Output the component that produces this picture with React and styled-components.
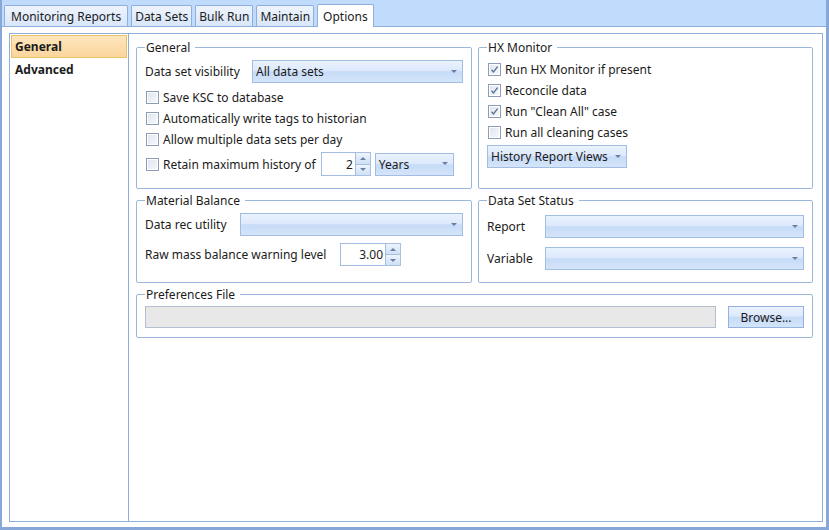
import React from "react";
import styled, { createGlobalStyle, css } from "styled-components";

const Global = createGlobalStyle`
  html, body { margin: 0; padding: 0; background: #fff; }
  * { box-sizing: border-box; }
  body { font-family: "Segoe UI", "Noto Sans", "Open Sans", sans-serif; font-size: 12px; color: #1b1b1b; }
`;

const FONT = `"Segoe UI", "Noto Sans", "Open Sans", sans-serif`;
const BORDER = "#8eaedb";

const Window = styled.div`
  width: 829px;
  height: 530px;
  display: flex;
  flex-direction: column;
  background: #c0dbfc;
  border-left: 2px solid #86a7d8;
  border-right: 3px solid #86a7d8;
  border-bottom: 3px solid #86a7d8;
  font-family: ${FONT};
  font-size: 12px;
`;

const TabStrip = styled.div`
  height: 26px;
  display: flex;
  align-items: flex-end;
  gap: 3px;
  padding-left: 2px;
  position: relative;
  z-index: 1;
`;

const Tab = styled.div`
  height: 21px;
  padding: 0 ${(p) => p.$pad || 5}px;
  display: flex;
  align-items: center;
  border: 1px solid ${BORDER};
  border-bottom: none;
  border-radius: 2px 2px 0 0;
  background: linear-gradient(#eef4fd, #d8e6f9);
  color: #1b1b1b;
  white-space: nowrap;
  ${(p) =>
    p.$active &&
    css`
      height: 23px;
      margin-bottom: -1px;
      background: #fff;
    `}
`;

const Panel = styled.div`
  flex: 1;
  min-height: 0;
  display: flex;
  background: #fff;
  border-top: 1px solid ${BORDER};
  padding: 6px 4px 5px 7px;
`;

const Frame = styled.div`
  flex: 1;
  display: flex;
  border: 1px solid ${BORDER};
`;

const Nav = styled.div`
  width: 119px;
  border-right: 1px solid ${BORDER};
  padding: 1px;
  display: flex;
  flex-direction: column;
`;

const NavItem = styled.div`
  height: 23px;
  display: flex;
  align-items: center;
  padding-left: 3px;
  font-weight: bold;
  border: 1px solid transparent;
  ${(p) =>
    p.$active &&
    css`
      border-color: #e8c466;
      background: linear-gradient(#fde6bd, #fbd59c);
    `}
`;

const Content = styled.div`
  flex: 1;
  display: grid;
  grid-template-columns: 336px 335px;
  grid-template-rows: 150px 91px 52px;
  column-gap: 6px;
  row-gap: 3px;
  padding: 5px 9px 0 7px;
  align-content: start;
`;

const Group = styled.fieldset`
  margin: 0;
  min-width: 0;
  padding: 0 8px;
  border: 1px solid #9cb7de;
  border-radius: 2px;
  display: flex;
  flex-direction: column;
  ${(p) => p.$wide && css`grid-column: 1 / span 2;`}
`;

const Legend = styled.legend`
  padding: 0 5px 0 1px;
  line-height: 17px;
  font-size: 12px;
`;

const Row = styled.div`
  display: flex;
  align-items: center;
  height: ${(p) => p.$h || 21}px;
  margin-top: ${(p) => p.$mt || 0}px;
`;

const Label = styled.span`
  width: ${(p) => (p.$w ? `${p.$w}px` : "auto")};
  flex-shrink: 0;
  white-space: nowrap;
  margin-right: ${(p) => p.$mr || 0}px;
`;

const ComboBox = styled.div`
  position: relative;
  height: 23px;
  ${(p) => (p.$w ? css`width: ${p.$w}px;` : css`flex: 1;`)}
  margin-left: ${(p) => p.$ml || 0}px;
  border: 1px solid #a3bde2;
  background: linear-gradient(#eaf2fe 0%, #dde9fb 45%, #c6dbf7 52%, #d4e5fa 100%);
  display: flex;
  align-items: center;
  padding-left: 3px;
  padding-right: 16px;
  white-space: nowrap;
  overflow: hidden;
`;

const Arrow = styled.span`
  position: absolute;
  right: 5px;
  top: 50%;
  margin-top: -2px;
  width: 0;
  height: 0;
  border-left: 3px solid transparent;
  border-right: 3px solid transparent;
  border-top: 3px solid #6a7fa3;
`;

const DropButton = styled(ComboBox)`
  flex: none;
  padding-left: 3px;
  padding-right: 18px;
`;

const BoxMark = styled.span`
  width: 13px;
  height: 13px;
  flex-shrink: 0;
  border: 1px solid #8d9db8;
  background: linear-gradient(135deg, #dfe5ee, #f7f9fc);
  box-shadow: inset 0 0 0 1px #fff;
  display: flex;
  align-items: center;
  justify-content: center;
  margin-left: ${(p) => p.$ml || 0}px;
  margin-right: 4px;
`;

const CheckSvg = () => (
  <svg width="9" height="9" viewBox="0 0 9 9">
    <path d="M1.5 4.8 L3.5 7 L7.6 1.6" fill="none" stroke="#5b7096" strokeWidth="1.3" />
  </svg>
);

const Check = ({ checked, ml, children }) => (
  <Row>
    <BoxMark $ml={ml}>{checked && <CheckSvg />}</BoxMark>
    <Label>{children}</Label>
  </Row>
);

const SpinWrap = styled.div`
  display: flex;
  height: ${(p) => p.$h || 24}px;
  margin-left: ${(p) => p.$ml || 0}px;
`;

const SpinField = styled.div`
  width: ${(p) => p.$w}px;
  border: 1px solid #a3bde2;
  background: #fff;
  display: flex;
  align-items: center;
  justify-content: flex-end;
  padding-right: 2px;
`;

const SpinButtons = styled.div`
  width: 15px;
  display: flex;
  flex-direction: column;
`;

const SpinBtn = styled.div`
  flex: 1;
  border: 1px solid #a8c0e2;
  border-left: none;
  ${(p) => p.$down && css`border-top: none;`}
  background: linear-gradient(#eef4fd, #cfe0f7);
  display: flex;
  align-items: center;
  justify-content: center;
  &::after {
    content: "";
    border-left: 3px solid transparent;
    border-right: 3px solid transparent;
    ${(p) =>
      p.$down
        ? css`border-top: 3px solid #6a7fa3;`
        : css`border-bottom: 3px solid #6a7fa3;`}
  }
`;

const Spinner = ({ value, w, h, ml }) => (
  <SpinWrap $h={h} $ml={ml}>
    <SpinField $w={w}>{value}</SpinField>
    <SpinButtons>
      <SpinBtn />
      <SpinBtn $down />
    </SpinButtons>
  </SpinWrap>
);

const TextField = styled.div`
  flex: 1;
  height: 22px;
  background: #e8e8e8;
  border: 1px solid #b3bfd0;
`;

const Button = styled.div`
  width: 76px;
  height: 22px;
  margin-left: 12px;
  border: 1px solid #94b2de;
  background: linear-gradient(#eaf2fe 0%, #dde9fb 45%, #c6dbf7 52%, #d4e5fa 100%);
  display: flex;
  align-items: center;
  justify-content: center;
`;

const Combo = ({ children, w, ml }) => (
  <ComboBox $w={w} $ml={ml}>
    {children}
    <Arrow />
  </ComboBox>
);

export default function App() {
  return (
    <>
      <Global />
      <Window>
        <TabStrip>
          <Tab $pad={6}>Monitoring Reports</Tab>
          <Tab $pad={3}>Data Sets</Tab>
          <Tab $pad={3}>Bulk Run</Tab>
          <Tab $pad={3}>Maintain</Tab>
          <Tab $active $pad={5}>Options</Tab>
        </TabStrip>
        <Panel>
          <Frame>
            <Nav>
              <NavItem $active>General</NavItem>
              <NavItem>Advanced</NavItem>
            </Nav>
            <Content>
              <Group>
                <Legend>General</Legend>
                <Row $h={23} $mt={4}>
                  <Label $w={107}>Data set visibility</Label>
                  <Combo>All data sets</Combo>
                </Row>
                <Row $h={4} />
                <Check ml={1}>Save KSC to database</Check>
                <Check ml={1}>Automatically write tags to historian</Check>
                <Check ml={1}>Allow multiple data sets per day</Check>
                <Row $h={24} $mt={2}>
                  <BoxMark $ml={1} />
                  <Label>Retain maximum history of</Label>
                  <Spinner value="2" w={35} h={24} ml={5} />
                  <Combo w={79} ml={4}>Years</Combo>
                </Row>
              </Group>
              <Group>
                <Legend>HX Monitor</Legend>
                <Row $h={3} />
                <Check checked ml={1}>Run HX Monitor if present</Check>
                <Check checked ml={1}>Reconcile data</Check>
                <Check checked ml={1}>Run "Clean All" case</Check>
                <Check ml={1}>Run all cleaning cases</Check>
                <Row $h={23} $mt={2}>
                  <DropButton>
                    History Report Views
                    <Arrow />
                  </DropButton>
                </Row>
              </Group>
              <Group>
                <Legend>Material Balance</Legend>
                <Row $h={23} $mt={4}>
                  <Label $w={95}>Data rec utility</Label>
                  <Combo />
                </Row>
                <Row $h={23} $mt={7}>
                  <Label $w={195}>Raw mass balance warning level</Label>
                  <Spinner value="3.00" w={46} h={23} />
                </Row>
              </Group>
              <Group>
                <Legend>Data Set Status</Legend>
                <Row $h={23} $mt={6}>
                  <Label $w={58}>Report</Label>
                  <Combo />
                </Row>
                <Row $h={23} $mt={9}>
                  <Label $w={58}>Variable</Label>
                  <Combo />
                </Row>
              </Group>
              <Group $wide>
                <Legend>Preferences File</Legend>
                <Row $h={22} $mt={3}>
                  <TextField />
                  <Button>Browse...</Button>
                </Row>
              </Group>
            </Content>
          </Frame>
        </Panel>
      </Window>
    </>
  );
}
